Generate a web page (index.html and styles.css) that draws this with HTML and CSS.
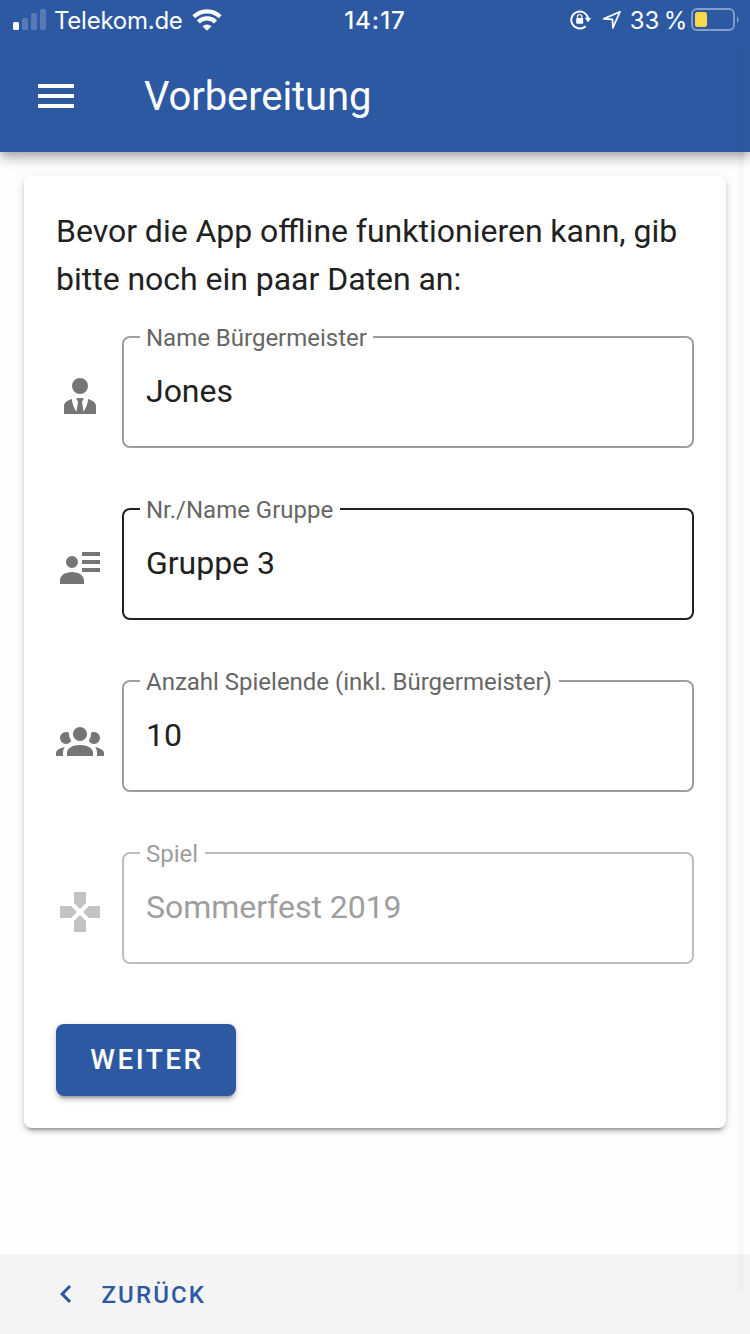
FILE: index.html
```
<!DOCTYPE html>
<html lang="de">
<head>
<meta charset="utf-8">
<title>Vorbereitung</title>
<link rel="stylesheet" href="styles.css">
</head>
<body>
<div class="app">
  <header class="app-header">
    <div class="status">
      <div class="status-left">
        <svg class="signal" width="34" height="22" viewBox="0 0 34 22" fill="#fff"><rect x="0" y="13" width="6" height="8" rx="1.5"/><g opacity=".2"><rect x="9" y="9" width="6" height="12" rx="1.5"/><rect x="18" y="4" width="6" height="17" rx="1.5"/><rect x="27" y="0" width="6" height="21" rx="1.5"/></g></svg>
        <span class="carrier">Telekom.de</span>
        <svg class="wifi" width="30" height="22" viewBox="0 0 30 22"><g fill="none" stroke="#fff" stroke-width="4.2"><path d="M1.800 7.800a18.700 18.700 0 0 1 26.400 0"/><path d="M6.400 13a12.200 12.200 0 0 1 17.200 0"/></g><path d="M10.500 17.300a6.300 6.300 0 0 1 9 0L15 21.800z" fill="#fff"/></svg>
      </div>
      <span class="clock">14:17</span>
      <div class="status-right">
        <svg class="lock" width="22" height="22" viewBox="0 0 22 22"><path d="M15.600 17.200A8.500 8.500 0 1 1 18.100 9.300" fill="none" stroke="#fff" stroke-width="1.900"/><path d="M14.800 8.700h6.400l-3.200 4.500z" fill="#fff"/><rect x="6.200" y="9" width="7" height="5.800" rx=".8" fill="#fff"/><path d="M7.500 9.500V7.700a2.200 2.200 0 0 1 4.400 0v1.800" fill="none" stroke="#fff" stroke-width="1.200"/></svg>
        <svg class="arrow" width="20" height="20" viewBox="0 0 20 20"><path d="M1.700 8.900L18 1.700 10.900 17.900 10.500 9.300z" fill="none" stroke="#fff" stroke-width="1.700" stroke-linejoin="round"/></svg>
        <span class="percent">33 %</span>
        <svg class="battery" width="48" height="24" viewBox="0 0 48 24"><rect x="1" y="1" width="42" height="21" rx="5" fill="none" stroke="#fff" stroke-opacity=".42" stroke-width="1.900"/><rect x="4" y="4" width="12" height="15" rx="2.500" fill="#f8d84a"/><path d="M46 8.500c2 1.200 2 5.200 0 6.500z" fill="#fff" opacity=".45"/></svg>
      </div>
    </div>
    <div class="toolbar">
      <svg width="36" height="24" viewBox="0 0 36 24" fill="#fff"><path d="M0 0h36v4H0zM0 10h36v4H0zM0 20h36v4H0z"/></svg>
      <h1 class="title">Vorbereitung</h1>
    </div>
  </header>

  <main class="content">
    <section class="card">
      <p class="intro">Bevor die App offline funktionieren kann, gib<br>bitte noch ein paar Daten an:</p>
      <div class="fields">
        <div class="row">
          <svg class="icon" viewBox="0 0 24 24"><path d="M12 3A4 4 0 0 1 16 7A4 4 0 0 1 12 11A4 4 0 0 1 8 7A4 4 0 0 1 12 3M16 13.540C16 14.600 15.720 17.070 13.810 19.830L13 15L13.940 13.120C13.320 13.050 12.670 13 12 13S10.680 13.050 10.060 13.120L11 15L10.190 19.830C8.280 17.070 8 14.600 8 13.540C5.610 14.240 4 15.500 4 17V21H20V17C20 15.500 18.400 14.240 16 13.540Z"/></svg>
          <fieldset class="field"><legend class="label">Name Bürgermeister</legend><div class="value">Jones</div></fieldset>
        </div>
        <div class="row">
          <svg class="icon" viewBox="0 0 24 24"><path d="M13 4h9v2h-9zM13 8h9v2h-9zM13 12h9v2h-9zM8 6a3 3 0 1 1 0 6a3 3 0 0 1 0-6M2 20v-2c0-2.200 2.700-4 6-4s6 1.800 6 4v2z"/></svg>
          <fieldset class="field active"><legend class="label wide">Nr./Name Gruppe</legend><div class="value">Gruppe 3</div></fieldset>
        </div>
        <div class="row">
          <svg class="icon" viewBox="0 0 24 24"><path d="M12 5.500A3.500 3.500 0 0 1 15.500 9A3.500 3.500 0 0 1 12 12.500A3.500 3.500 0 0 1 8.500 9A3.500 3.500 0 0 1 12 5.500M5 8C5.560 8 6.080 8.150 6.530 8.420C6.380 9.850 6.800 11.270 7.660 12.380C7.160 13.340 6.160 14 5 14A3 3 0 0 1 2 11A3 3 0 0 1 5 8M19 8A3 3 0 0 1 22 11A3 3 0 0 1 19 14C17.840 14 16.840 13.340 16.340 12.380C17.200 11.270 17.620 9.850 17.470 8.420C17.920 8.150 18.440 8 19 8M5.500 18.250C5.500 16.180 8.410 14.500 12 14.500C15.590 14.500 18.500 16.180 18.500 18.250V20H5.500V18.250M0 20V18.500C0 17.110 1.890 15.940 4.450 15.600C3.860 16.280 3.500 17.220 3.500 18.250V20H0M24 20H20.500V18.250C20.500 17.220 20.140 16.280 19.550 15.600C22.110 15.940 24 17.110 24 18.500V20Z"/></svg>
          <fieldset class="field"><legend class="label wide">Anzahl Spielende (inkl. Bürgermeister)</legend><div class="value">10</div></fieldset>
        </div>
        <div class="row disabled">
          <svg class="icon" viewBox="0 0 24 24"><path d="M16.500 9L13.500 12L16.500 15H22V9M9 16.500V22H15V16.500L12 13.500M7.500 9H2V15H7.500L10.500 12M15 7.500V2H9V7.500L12 10.500L15 7.500Z"/></svg>
          <fieldset class="field"><legend class="label wide">Spiel</legend><div class="value">Sommerfest 2019</div></fieldset>
        </div>
      </div>
      <button class="next">WEITER</button>
    </section>
  </main>

  <footer class="footer">
    <svg width="36" height="36" viewBox="0 0 24 24" fill="#2d59a3"><path d="M15.410 16.580L10.830 12L15.410 7.410L14 6L8 12L14 18L15.410 16.580Z"/></svg>
    <span class="back">ZURÜCK</span>
  </footer>
  <div class="scrollbar"></div>
</div>
</body>
</html>
```
FILE: styles.css
```
* { box-sizing: border-box; }
body { margin: 0; font-family: Roboto, sans-serif; color: #212121; }
.app { position: relative; display: flex; flex-direction: column; height: 1334px; background: #fefefe; overflow: hidden; }
svg { display: block; flex: none; }

.app-header {
  height: 152px; flex: none; background: #2d59a3; color: #fff; z-index: 1;
  box-shadow: 0 4px 8px -2px rgba(0,0,0,.2), 0 8px 10px rgba(0,0,0,.14), 0 2px 20px rgba(0,0,0,.12);
}
.status { display: grid; grid-template-columns: 1fr auto 1fr; height: 40px; align-items: center; font: 24px/40px Inter, sans-serif; }
.status-left { display: flex; align-items: center; padding-left: 13px; }
.carrier { margin-left: 7px; padding-top: 2px; line-height: 38px; letter-spacing: -.25px; }
.wifi { margin-left: 9px; }
.clock { padding-top: 2px; line-height: 38px; font-weight: 500; letter-spacing: 1px; }
.status-right { display: flex; align-items: center; justify-content: flex-end; padding-right: 11px; }
.arrow { margin-left: 10px; }
.percent { margin: 0 4px 0 8px; padding-top: 2px; line-height: 38px; word-spacing: -2px; letter-spacing: -.2px; }
.toolbar { display: flex; align-items: center; height: 112px; padding-left: 38px; }
.title { margin: 0 0 0 70px; padding-top: 2px; font-size: 40px; font-weight: 400; line-height: 60px; letter-spacing: -.08px; }

.content { flex: 1; padding: 24px; }
.card {
  height: 952px; padding: 31px 32px 32px; border-radius: 8px; background: #fff;
  box-shadow: 0 6px 2px -4px rgba(0,0,0,.2), 0 4px 4px rgba(0,0,0,.14), 0 2px 10px rgba(0,0,0,.12);
}
.intro { margin: 0; font-size: 32px; line-height: 48px; word-spacing: -.15px; white-space: nowrap; }
.fields { display: flex; flex-direction: column; gap: 47px; margin-top: 20px; }
.row { display: flex; align-items: center; gap: 18px; height: 125px; }
.icon { width: 48px; height: 48px; margin-top: 29px; margin-bottom: 8px; fill: #757575; }
.field { flex: 1; min-width: 0; height: 125px; margin: 0; padding: 0 16px; border: 2px solid #9e9e9e; border-radius: 8px; }
.field.active { border-color: #212121; }
.label { height: 28px; padding: 1px 6px 0; font-size: 24px; line-height: 28px; letter-spacing: -.01px; color: #666; white-space: nowrap; }
.label.wide { padding-right: 7px; }
.value { padding: 20px 6px 0; font-size: 32px; line-height: 40px; letter-spacing: -.03px; }
.disabled .icon { fill: #c2c2c2; }
.disabled .field { border-color: #bdbdbd; }
.disabled .label, .disabled .value { color: #9e9e9e; }
.next {
  display: block; width: 180px; height: 72px; margin-top: 60px; padding: 0 0 0 2px; border: 0; border-radius: 8px;
  background: #2d59a3; color: #fff; font: 500 28px/72px Roboto, sans-serif; letter-spacing: 2.5px;
  box-shadow: 0 6px 2px -4px rgba(0,0,0,.2), 0 4px 4px rgba(0,0,0,.14), 0 2px 10px rgba(0,0,0,.12);
}
.footer { display: flex; align-items: center; flex: none; height: 80px; padding-left: 48px; background: #f4f4f4; }
.back { margin-left: 17.5px; padding-top: 2px; color: #2d59a3; font-size: 24px; font-weight: 500; letter-spacing: 2.140px; }
.scrollbar { position: absolute; z-index: 2; right: 6px; top: 46px; width: 6px; height: 1245px; border-radius: 3px; background: rgba(0,0,0,.02); }
```
